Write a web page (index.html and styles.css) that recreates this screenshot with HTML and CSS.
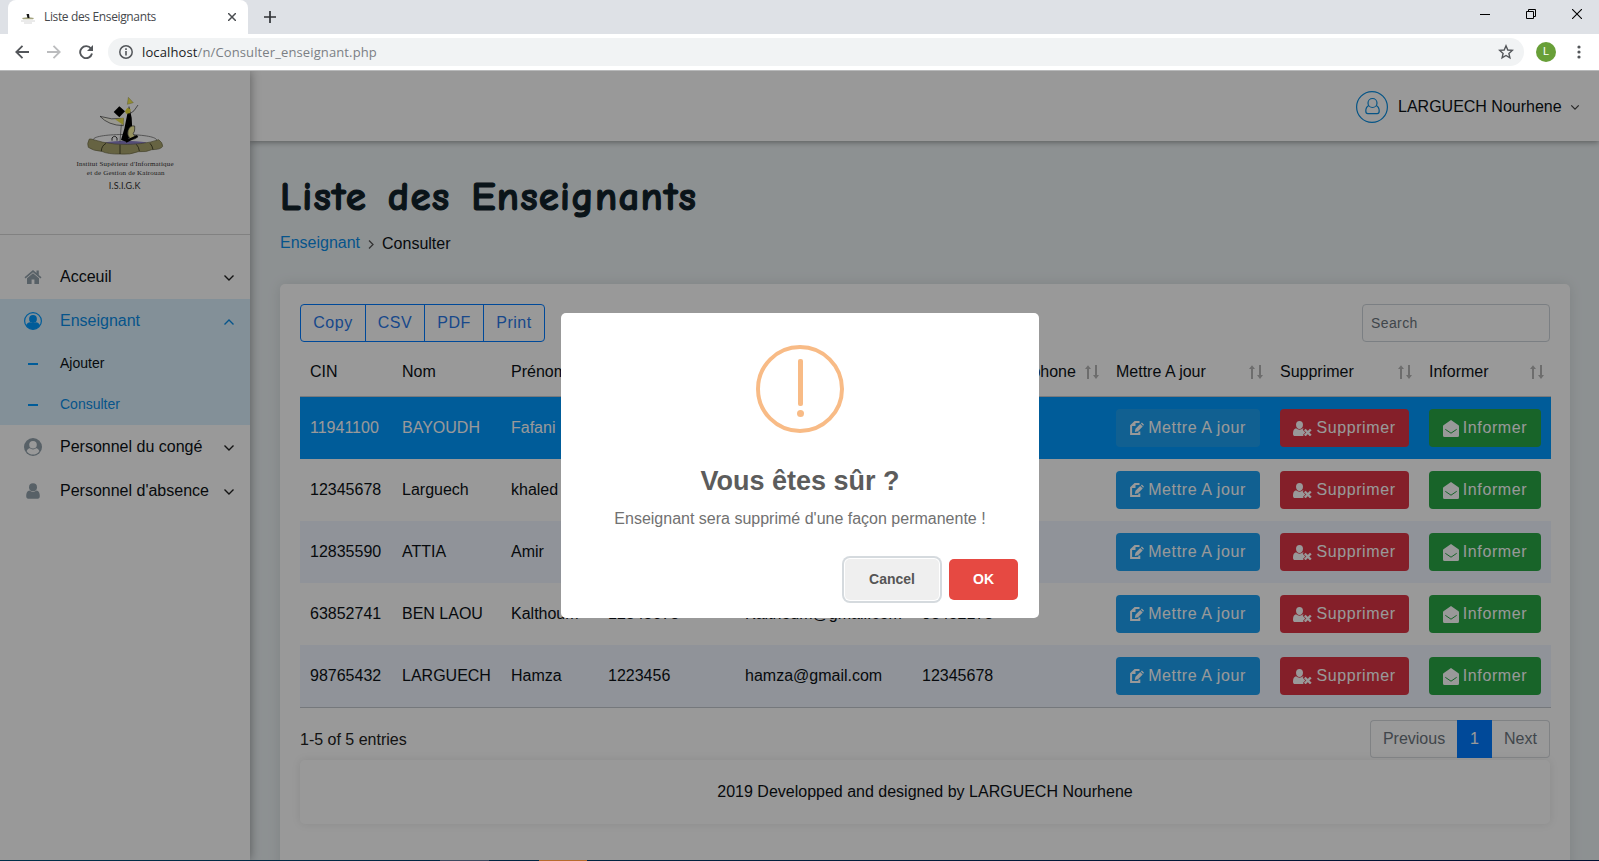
FILE: index.html
```html
<!DOCTYPE html>
<html lang="fr">
<head>
<meta charset="utf-8">
<title>Liste des Enseignants</title>
<link rel="stylesheet" href="styles.css">
</head>
<body>
<svg class="defs" width="0" height="0" aria-hidden="true">
  <symbol id="down" viewBox="0 0 12 8"><path d="M1.500 1.500 6 6l4.500-4.500" fill="none" stroke="currentColor" stroke-width="1.400"/></symbol>
  <symbol id="sort" viewBox="0 0 16 16"><path d="M3 15V5H1L4 1.300 7 5H5V15zM11 1v10H9l3 4 3-4h-2V1z" fill="currentColor"/></symbol>
  <symbol id="edit" viewBox="0 0 14 14"><path d="M9.500 1H5L1.100 4.600V13H9.300V10.500" fill="none" stroke="currentColor" stroke-width="2"/><path d="M5.500 1v4H1z" fill="currentColor"/><path d="M4.800 11l.7-3.200L10.200 3.100l2.500 2.500L8 10.300zM10.900 2.400l1-1 2.100 2.400-.9 1z" fill="currentColor"/></symbol>
  <symbol id="userx" viewBox="0 0 19 15"><path d="M6.500 0C8.800 0 10 1.600 10 3.800 10 6.200 8.600 8 6.500 8S3 6.200 3 3.800C3 1.600 4.200 0 6.500 0z" fill="currentColor"/><path d="M3 7.300C5 9.200 8 9.200 10 7.300l.6.300-.9 1.200 2.600 2.700-2.400 2.500.9 1H2C.7 15 0 14.200 0 12.700 0 10 .8 7.700 3 7.300z" fill="currentColor"/><path d="M11.800 8.500l6 6M17.800 8.500l-6 6" stroke="currentColor" stroke-width="2.400"/></symbol>
  <symbol id="mail" viewBox="0 0 16 17"><path d="M0 6.200Q0 5.400.8 4.900L8 0l7.200 4.900q.8.500.8 1.300V15.500Q16 17 14.500 17h-13Q0 17 0 15.500z" fill="currentColor"/><path d="M2.300 9.300 8 13.200l5.700-3.900" fill="none" stroke="#28a745" stroke-width="1"/></symbol>
</svg>

<header class="browser">
  <div class="tabstrip">
    <div class="tab">
      <svg class="favicon" width="16" height="16" viewBox="0 0 16 16"><path d="M2 9q6-1.500 12 0l-1 1.200H3z" fill="#a5a580"/><path d="M6.500 5H9l.5 4H7.500z" fill="#151515"/><path d="M1 12h14M4 14h8" stroke="#ccc" stroke-width=".8"/></svg>
      <span class="tab-title">Liste des Enseignants</span>
      <svg width="8" height="8" viewBox="0 0 8 8"><path d="M0 0l8 8M8 0 0 8" stroke="#4a4d51" stroke-width="1.500"/></svg>
    </div>
    <svg class="newtab" width="12" height="12" viewBox="0 0 12 12"><path d="M6 0v12M0 6h12" stroke="#303236" stroke-width="1.700"/></svg>
    <div class="winbtns">
      <svg width="10" height="10" viewBox="0 0 10 10"><path d="M0 5.500h10" stroke="#000"/></svg>
      <svg width="10" height="10" viewBox="0 0 10 10"><path d="M.5 2.500h7v7h-7zM2.500 2.500v-2h7v7h-2" fill="none" stroke="#000"/></svg>
      <svg width="10" height="10" viewBox="0 0 10 10"><path d="M0 0l10 10M10 0 0 10" stroke="#000" stroke-width="1.100"/></svg>
    </div>
  </div>
  <div class="toolbar">
    <svg class="back" width="14" height="14" viewBox="0 0 14 14"><path d="M14 7H1.500M7.500.8 1.300 7l6.200 6.200" fill="none" stroke="#53565a" stroke-width="1.800"/></svg>
    <svg class="fwd" width="14" height="14" viewBox="0 0 14 14"><path d="M0 7h12.500M6.500.8 12.700 7l-6.200 6.200" fill="none" stroke="#bbbcbe" stroke-width="1.800"/></svg>
    <svg class="reload" width="14" height="14" viewBox="0 0 14 14"><path d="M12 3.600A6 6 0 1 0 13 8.600" fill="none" stroke="#53565a" stroke-width="1.900"/><path d="M14 0v6H8z" fill="#53565a"/></svg>
    <div class="address">
      <svg width="14" height="14" viewBox="0 0 14 14"><circle cx="7" cy="7" r="6.200" fill="none" stroke="#53565a" stroke-width="1.500"/><path d="M7 6v4.500M7 3.300v1.600" stroke="#53565a" stroke-width="1.600"/></svg>
      <span class="url"><b>localhost</b>/n/Consulter_enseignant.php</span>
      <svg class="star" width="16" height="16" viewBox="0 0 16 16"><path d="M8 1.800l1.800 4.200 4.500.4-3.400 3 1 4.400L8 11.500l-3.900 2.300 1-4.400-3.400-3L6.200 6z" fill="none" stroke="#53565a" stroke-width="1.400"/></svg>
    </div>
    <span class="profile">L</span>
    <svg class="kebab" width="4" height="14" viewBox="0 0 4 14"><g fill="#53565a"><circle cx="2" cy="2" r="1.600"/><circle cx="2" cy="7" r="1.600"/><circle cx="2" cy="12" r="1.600"/></g></svg>
  </div>
</header>

<div class="app">
  <aside class="sidebar">
    <div class="brand">
      <svg width="130" height="115" viewBox="0 0 390 345">
        <path d="M100 165C95 143 285 143 290 165C292 190 100 190 100 165z" fill="#fff" stroke="#555" stroke-width="2"/>
        <path d="M135 172q60-10 125 0l-20 12h-90z" fill="#8c80c8"/>
        <path d="M156 167v-8q8-10 15 0v8" fill="none" stroke="#333" stroke-width="3"/>
        <path d="M88 162q-8 14-3 25 15 11 40 12 20 9 55 8 30 3 55-7 25 2 40-6 28 0 33-10 0-12-12-20-20 8-55 12-80 9-148-14z" fill="#aaa56e" stroke="#6d6945" stroke-width="2"/>
        <path d="M124 199q0-16 14-24M180 207v-28M238 198q-1-12-9-20M279 194q-2-12-9-19" fill="none" stroke="#34331f" stroke-width="2.500"/>
        <path d="M120 94q35 12 70 6-2 14 0 22-45-1-70-28z" fill="#fffef0" stroke="#333" stroke-width="2"/>
        <path d="M165 103l26-5-1 22z" fill="#ece34a"/>
        <path d="M184 118l-4 52" stroke="#555" stroke-width="2"/>
        <path d="M207 62l8 36 2 40-16 33-18-6 10-34z" fill="#000"/>
        <path d="M205 37l-3 21 18-5z" fill="#f3ea55" stroke="#77722b"/>
        <path d="M195 79l7-11 10 5-2 12-12 1z" fill="#eee23a"/>
        <path d="M234 60q-10 20-28 29" fill="none" stroke="#333" stroke-width="2"/>
        <path d="M178 64l17 15-17 18-17-16z" fill="#000"/>
        <path d="M224 123q-14-3-20 14-4 14 7 25 16 3 22-7-13-2-14-10 6-2 5-22z" fill="#fbf4a0" stroke="#333" stroke-width="2"/>
        <path d="M196 166l35-16 3 6-35 17z" fill="#000"/>
        <g text-anchor="middle" fill="#333">
          <text x="195" y="243" class="logo-serif" textLength="291">Institut Supérieur d'Informatique</text>
          <text x="197" y="269" class="logo-serif" textLength="233">et de Gestion de Kairouan</text>
          <text x="194" y="311" class="logo-sans" textLength="95">I.S.I.G.K</text>
        </g>
      </svg>
    </div>
    <nav class="menu">
      <a class="item"><svg class="ico" width="18" height="16" viewBox="0 0 18 16"><path d="M9 1 .5 8.200l1 1.200L9 3.200l7.500 6.200 1-1.200-2.700-2.300V1.500h-2.300v2.500z" fill="currentColor"/><path d="M9 4.300 3 9.300V15h4.600V10.500h2.800V15H15V9.300z" fill="currentColor"/></svg><span>Acceuil</span><svg class="chev" width="12" height="8"><use href="#down"/></svg></a>
      <div class="open">
        <a class="item active"><svg class="ico" width="18" height="18" viewBox="0 0 18 18"><circle cx="9" cy="9" r="8.400" fill="none" stroke="currentColor" stroke-width="1.200"/><circle cx="9" cy="7" r="3.900" fill="currentColor"/><path d="M2 13.500C2.600 11.500 4 10.300 6.300 10.200q2.700 1.700 5.400 0c2.300.1 3.700 1.300 4.300 3.300A8.400 8.400 0 0 1 2 13.500z" fill="currentColor"/></svg><span>Enseignant</span><svg class="chev up" width="12" height="8"><use href="#down"/></svg></a>
        <a class="sub"><i></i><span>Ajouter</span></a>
        <a class="sub active"><i></i><span>Consulter</span></a>
      </div>
      <a class="item"><svg class="ico" width="18" height="18" viewBox="0 0 18 18"><circle cx="9" cy="9" r="9" fill="currentColor"/><path d="M6.200 9.900C4.200 10.200 3 11.800 2.700 13.200a7.600 7.600 0 0 0 12.600 0c-.3-1.400-1.500-3-3.500-3.300q-2.800 2.200-5.600 0z" fill="#fff"/><circle cx="9" cy="6.800" r="4.600" fill="currentColor"/><circle cx="9" cy="6.800" r="3.800" fill="#fff"/></svg><span>Personnel du congé</span><svg class="chev" width="12" height="8"><use href="#down"/></svg></a>
      <a class="item"><svg class="ico" width="14" height="16" viewBox="0 0 14 16"><circle cx="7" cy="4.200" r="4" fill="currentColor"/><path d="M3.500 7.500q3.500 2.800 7 0c2.300.3 3.300 2.500 3.300 5.500 0 1.800-.8 2.800-2 2.800H2.200c-1.200 0-2-1-2-2.800 0-3 1-5.200 3.300-5.500z" fill="currentColor"/></svg><span>Personnel d'absence</span><svg class="chev" width="12" height="8"><use href="#down"/></svg></a>
    </nav>
  </aside>

  <main class="content">
    <div class="topbar">
      <svg width="32" height="32" viewBox="0 0 32 32"><g fill="none" stroke="#0a8de0" stroke-width="1.200"><circle cx="16" cy="16" r="15.400"/><circle cx="16.500" cy="12" r="4.500"/><path d="M12.800 14.500c-2 1-3 3-3 5.500 0 1.500.8 2.600 2 2.600h9.400c1.200 0 2-1.100 2-2.600 0-2.500-1-4.500-3-5.500"/></g></svg>
      <span>LARGUECH Nourhene</span>
      <svg width="10" height="7" viewBox="0 0 12 8"><path d="M1.500 1.500 6 6l4.500-4.500" fill="none" stroke="#444" stroke-width="1.500"/></svg>
    </div>
    <div class="page">
      <h1>Liste des Enseignants</h1>
      <div class="crumbs"><a>Enseignant</a><svg width="6" height="9" viewBox="0 0 6 9"><path d="M1 .5l4 4-4 4" fill="none" stroke="#555" stroke-width="1.300"/></svg><span>Consulter</span></div>
      <section class="card">
        <div class="tools">
          <div class="exports"><button>Copy</button><button>CSV</button><button>PDF</button><button>Print</button></div>
          <input class="search" placeholder="Search">
        </div>
        <div class="table" id="table">
          <div class="row head">
            <div>CIN</div><div>Nom</div><div>Prénom</div><div></div><div></div>
            <div>Numéro de téléphone<svg width="16" height="16"><use href="#sort"/></svg></div>
            <div>Mettre A jour<svg width="16" height="16"><use href="#sort"/></svg></div>
            <div>Supprimer<svg width="16" height="16"><use href="#sort"/></svg></div>
            <div>Informer<svg width="16" height="16"><use href="#sort"/></svg></div>
          </div>
        </div>
        <div class="pager">
          <span>1-5 of 5 entries</span>
          <div class="pages"><a class="prev">Previous</a><a class="cur">1</a><a class="next">Next</a></div>
        </div>
        <footer class="footer">2019 Developped and designed by LARGUECH Nourhene</footer>
      </section>
    </div>
  </main>

  <div class="overlay">
    <div class="modal">
      <svg class="warn" width="88" height="88" viewBox="0 0 88 88"><circle cx="44" cy="44" r="42" fill="none" stroke="#f8bb86" stroke-width="4"/><rect x="42" y="14" width="5" height="47" rx="2" fill="#f8bb86"/><circle cx="44.500" cy="68.500" r="3.500" fill="#f8bb86"/></svg>
      <div class="modal-title">Vous êtes sûr ?</div>
      <div class="modal-text">Enseignant sera supprimé d'une façon permanente !</div>
      <div class="modal-foot"><button class="cancel">Cancel</button><button class="ok">OK</button></div>
    </div>
  </div>
</div>
<div class="taskbar"><i class="t1"></i><i class="t2"></i></div>
<script src="app.js"></script>
</body>
</html>
```
FILE: styles.css
```css
* { box-sizing: border-box; }
body { margin: 0; width: 1599px; height: 861px; overflow: hidden; display: flex; flex-direction: column; font: 16px/24px "Liberation Sans", Arial, sans-serif; color: #0c1116; }
svg { flex: none; display: block; }
button { font: inherit; margin: 0; }
.defs { position: absolute; }

.browser { height: 71px; background: #fff; border-bottom: 1px solid #b8b9ba; font-family: "Open Sans", "Noto Sans", sans-serif; flex: none; }
.tabstrip { height: 34px; background: #dee1e6; display: flex; align-items: center; padding-left: 8px; }
.tab { width: 240px; height: 34px; background: #fff; border-radius: 8px 8px 0 0; display: flex; align-items: center; padding: 0 12px; }
.favicon { margin-right: 8px; }
.tab-title { flex: 1; font-size: 12px; letter-spacing: -.36px; color: #45484c; }
.newtab { margin-left: 16px; }
.winbtns { margin-left: auto; margin-right: 17px; display: flex; gap: 36px; margin-top: -6px; }
.toolbar { height: 36px; display: flex; align-items: center; padding: 0 20px 0 15px; }
.fwd { margin-left: 18px; }
.reload { margin-left: 18px; }
.address { margin-left: 15px; width: 1416px; height: 28px; border-radius: 14px; background: #f1f3f4; display: flex; align-items: center; padding: 0 10px 0 11px; }
.url { margin-left: 9px; flex: 1; font-size: 13px; color: #7b7f84; letter-spacing: .12px; }
.url b { font-weight: 400; color: #202124; }
.profile { margin-left: 12px; width: 20px; height: 20px; border-radius: 50%; background: #689f38; color: #fff; font: 11px/20px Roboto, sans-serif; text-align: center; }
.toolbar .kebab { margin-left: auto; margin-right: -1.500px; }

.app { height: 789px; flex: none; display: flex; overflow: hidden; position: relative; background: #ecf2f4; }
.sidebar { width: 250px; flex: none; background: #fff; box-shadow: 0 0 10px rgba(0,0,0,.4); z-index: 2; }
.brand { height: 164px; border-bottom: 1px solid #d8d8d8; padding: 14px 0 0 60px; }
.logo-serif { font: 21px "Liberation Serif", serif; }
.logo-sans { font: 27px Lato, sans-serif; }
.menu { padding-top: 20px; }
.item { height: 44px; display: flex; align-items: center; padding: 0 15px 0 24px; }
.ico { width: 18px; color: #93a2ac; }
.item span { flex: 1; margin-left: 18px; }
.chev { color: #222; margin: 2px 0 0; }
.up { transform: scaleY(-1); }
.open { background: #dbf1fd; }
.active, .active .ico, .active .chev { color: #0a8de8; }
.active .ico { color: #0099ff; }
.sub { height: 41px; display: flex; align-items: center; font-size: 14px; padding: 0 0 2px 28px; }
.sub i { width: 10px; height: 2px; background: #0099ff; margin: 2px 22px 0 0; }

.content { flex: 1; min-width: 0; }
.topbar { height: 70px; background: #fff; box-shadow: 0 1px 6px rgba(0,0,0,.4); display: flex; align-items: center; justify-content: flex-end; padding: 2px 19px 0 0; position: relative; }
.topbar span { margin: 0 9px 0 10px; width: 163px; white-space: nowrap; }
.page { padding: 32px 29px 0 30px; }
h1 { margin: 0; height: 48px; font: 700 41px/48px "Comic Sans MS", "Comic Neue", cursive; color: #11222a; white-space: nowrap; word-spacing: 5px; letter-spacing: 1.200px; -webkit-text-stroke: 1.100px #11222a; }
.crumbs { display: flex; align-items: center; height: 24px; margin-top: 10px; }
.crumbs a { color: #0a8de8; margin-right: 8px; }
.crumbs span { margin: 2px 0 0 8px; }
.crumbs svg { margin-top: 3px; }
.card { margin-top: 29px; height: 620px; background: #fff; border-radius: 5px; box-shadow: 0 0 14px rgba(0,0,0,.1); padding: 20px; }
.tools { display: flex; justify-content: space-between; height: 38px; }
.exports { display: flex; }
.exports button { width: 60px; margin-right: -1px; height: 38px; padding: 0; border: 1px solid #007bff; background: none; color: #2a78e8; letter-spacing: .5px; }
.exports button:first-child { width: 66px; border-radius: 4px 0 0 4px; }
.exports button:last-child { width: 62px; border-radius: 0 4px 4px 0; }
.search { width: 188px; height: 38px; border: 1px solid #ced4da; border-radius: 4px; padding: 0 8px; font: 14px "Liberation Sans", sans-serif; letter-spacing: .4px; background: none; }
.search::placeholder { color: #6c757d; opacity: 1; }
.table { border-bottom: 1px solid #c3c8cf; width: 1251px; }
.row { display: grid; grid-template-columns: 92px 109px 97px 137px 177px 194px 164px 149px 132px; height: 62px; align-items: center; }
.row > div { padding: 0 0 0 10px; white-space: nowrap; }
.row:nth-child(even) { background: #0099ff; color: #fff; }
.row:nth-child(n+3) { background: #fff; color: inherit; }
.row:nth-child(4), .row:nth-child(6) { background: #f0f6ff; }
.head { height: 55px; border-bottom: 1px solid #c8ccd0; padding-top: 5px; }
.head > div { display: flex; justify-content: space-between; align-items: center; }
.head svg { color: #b6b6b6; }
.table .head div:nth-child(n+6) { padding-right: 6px; }
.btn { display: flex; align-items: center; justify-content: center; height: 38px; border-radius: 4px; color: #fff; letter-spacing: .6px; gap: 4px; }
.edit { width: 144px; background: #1da1f2; }
.del { width: 129px; background: #dc3545; }
.info { width: 112px; background: #28a745; }
.info svg { margin-top: 1px; }
.pager { height: 50px; display: flex; justify-content: space-between; padding-top: 12px; }
.pager > span { margin-top: 8px; color: #222; }
.pages { display: flex; height: 38px; line-height: 36px; text-align: center; color: #6c757d; width: 180px; }
.pages a { border: 1px solid #d5d9dd; height: 38px; }
.pages .prev { width: 87px; border-right: 0; border-radius: 4px 0 0 4px; }
.pages .cur { width: 35px; background: #007bff; border-color: #007bff; color: #fff; }
.pages .next { width: 58px; border-left: 0; border-radius: 0 4px 4px 0; }
.footer { margin-top: 2px; height: 64px; line-height: 64px; text-align: center; border-radius: 5px; box-shadow: 0 0 10px rgba(0,0,0,.09); }

.overlay { position: absolute; inset: 0; z-index: 5; background: rgba(0,0,0,.4); display: flex; justify-content: center; align-items: flex-start; padding-top: 242px; }
.modal { width: 478px; height: 305px; background: #fff; border-radius: 5px; padding-top: 32px; text-align: center; margin-left: 1px; }
.warn { margin: 0 auto; }
.modal-title { margin-top: 30px; font: 700 27px/36px "Liberation Sans", sans-serif; color: #5c5c5c; }
.modal-text { margin-top: 8px; color: #717171; }
.modal-foot { display: flex; justify-content: flex-end; gap: 10px; padding: 28px 21px 0 0; }
.modal-foot button { height: 41px; border: 0; border-radius: 5px; font-weight: 700; font-size: 14px; padding: 0 0 2px; }
.cancel { width: 94px; background: #efefef; color: #555; box-shadow: 0 0 0 1px #fff, 0 0 0 3px #d5dade; }
.ok { width: 69px; background: #e64942; color: #fff; }
.taskbar { height: 1px; flex: none; background: linear-gradient(90deg, #01304a, #021031); display: flex; padding-left: 440px; gap: 50px; }
.t1 { width: 49px; background: #3c4a60; }
.t2 { width: 48px; background: #b86b2c; }
```
FILE: app.js
```js
const teachers = [
  ["11941100", "BAYOUDH", "Fafani", "", "", ""],
  ["12345678", "Larguech", "khaled", "", "", ""],
  ["12835590", "ATTIA", "Amir", "", "", ""],
  ["63852741", "BEN LAOU", "Kalthoum", "12345678", "Kalthoum@gmail.com", "98452178"],
  ["98765432", "LARGUECH", "Hamza", "1223456", "hamza@gmail.com", "12345678"]
];
const button = (kind, icon, w, h, label) =>
  `<div><span class="btn ${kind}"><svg width="${w}" height="${h}"><use href="#${icon}"/></svg>${label}</span></div>`;
const table = document.getElementById("table");
for (const t of teachers) {
  const row = document.createElement("div");
  row.className = "row";
  row.innerHTML = t.map(v => `<div>${v}</div>`).join("") +
    button("edit", "edit", 14, 14, "Mettre A jour") +
    button("del", "userx", 19, 15, "Supprimer") +
    button("info", "mail", 16, 17, "Informer");
  table.appendChild(row);
}
```
